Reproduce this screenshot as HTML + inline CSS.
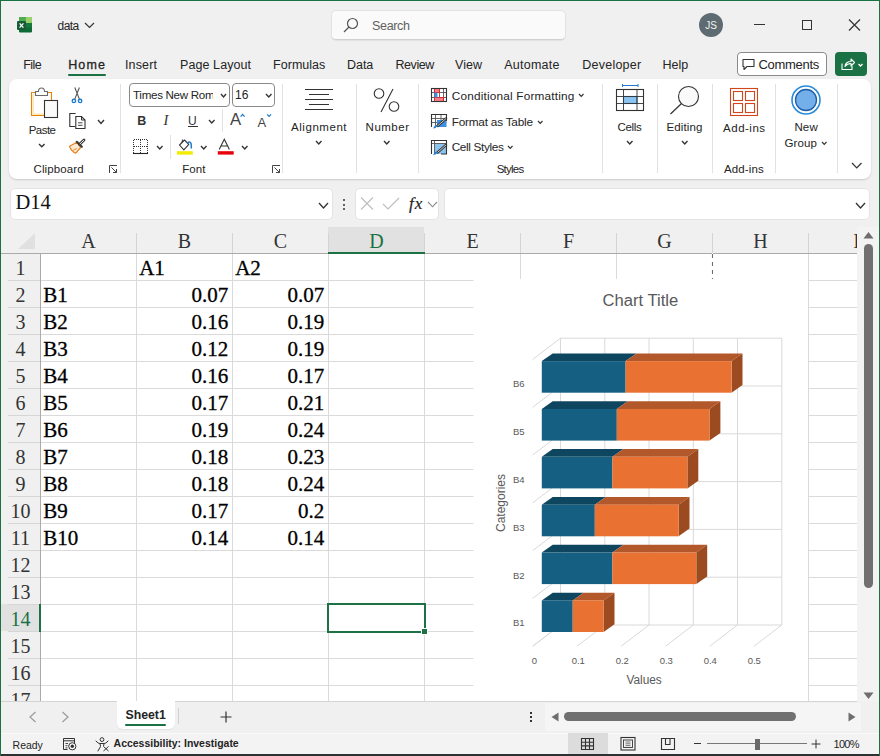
<!DOCTYPE html>
<html><head><meta charset="utf-8"><style>
html,body{margin:0;padding:0;}
body{width:880px;height:756px;overflow:hidden;position:relative;background:#f0f0f0;font-family:'Liberation Sans', sans-serif;}
.t{position:absolute;line-height:1;white-space:nowrap;}
.b{position:absolute;}
svg.b{overflow:visible;}
</style></head><body>
<svg class="b" style="left:0;top:0" width="880" height="756"><rect x="19" y="17" width="13" height="15.5" rx="1.2" fill="#0e6b35"/>
<rect x="19" y="17" width="6.5" height="6" fill="#4cae4f"/>
<rect x="25.5" y="17" width="6.5" height="6" rx="0.8" fill="#9bd16b"/>
<rect x="19" y="23" width="13" height="4.5" fill="#17783d"/>
<rect x="17" y="21" width="9" height="9" rx="1" fill="#185c37"/>
<path d="M19.6 23.4 L23.4 27.6 M23.4 23.4 L19.6 27.6" stroke="#fff" stroke-width="1.3"/></svg><div class="t" style="left:57.6px;top:20.0px;font-size:12px;color:#242424;font-weight:normal;font-family:'Liberation Sans', sans-serif;letter-spacing:-0.57px;">data</div><svg class="b" style="left:84px;top:22px;" width="11" height="7" viewBox="0 0 11 7"><path d="M1 1 L5.5 5.5 L10 1" fill="none" stroke="#333" stroke-width="1.2"/></svg><div class="b" style="left:331px;top:10px;width:235px;height:30px;background:#fafafa;border:1px solid #e3e3e3;border-bottom-color:#d0d0d0;border-radius:5px;box-sizing:border-box;box-shadow:0 1px 1px rgba(0,0,0,0.06);"></div><svg class="b" style="left:342px;top:17px;" width="18" height="17" viewBox="0 0 18 17"><circle cx="10.5" cy="6.5" r="5" fill="none" stroke="#555" stroke-width="1.2"/><path d="M7 10 L2 15" stroke="#555" stroke-width="1.3"/></svg><div class="t" style="left:372.0px;top:20.0px;font-size:12.5px;color:#616161;font-weight:normal;font-family:'Liberation Sans', sans-serif;letter-spacing:-0.33px;">Search</div><svg class="b" style="left:699px;top:13px;" width="24" height="24" viewBox="0 0 24 24"><circle cx="12" cy="12" r="12" fill="#5f6b72"/><text x="12" y="16" font-family="Liberation Sans" font-size="10" fill="#f0f0f0" text-anchor="middle">JS</text></svg><div class="b" style="left:754px;top:24px;width:11px;height:1px;background:#333;"></div><div class="b" style="left:802px;top:20px;width:10px;height:10px;border:1.2px solid #333;box-sizing:border-box;"></div><svg class="b" style="left:848px;top:19px;" width="14" height="12" viewBox="0 0 14 12"><path d="M1 0.5 L12 11.5 M12 0.5 L1 11.5" stroke="#333" stroke-width="1.2"/></svg><div class="t" style="left:23.2px;top:59.0px;font-size:12.5px;color:#242424;font-weight:normal;font-family:'Liberation Sans', sans-serif;letter-spacing:-0.54px;">File</div><div class="t" style="left:68.2px;top:59.0px;font-size:12.5px;color:#242424;font-weight:normal;font-family:'Liberation Sans', sans-serif;letter-spacing:1.12px;-webkit-text-stroke:0.3px #242424;">Home</div><div class="t" style="left:125.0px;top:59.0px;font-size:12.5px;color:#242424;font-weight:normal;font-family:'Liberation Sans', sans-serif;letter-spacing:0.15px;">Insert</div><div class="t" style="left:180.1px;top:59.0px;font-size:12.5px;color:#242424;font-weight:normal;font-family:'Liberation Sans', sans-serif;letter-spacing:0.07px;">Page Layout</div><div class="t" style="left:273.1px;top:59.0px;font-size:12.5px;color:#242424;font-weight:normal;font-family:'Liberation Sans', sans-serif;letter-spacing:0.02px;">Formulas</div><div class="t" style="left:347.0px;top:59.0px;font-size:12.5px;color:#242424;font-weight:normal;font-family:'Liberation Sans', sans-serif;letter-spacing:-0.05px;">Data</div><div class="t" style="left:395.5px;top:59.0px;font-size:12.5px;color:#242424;font-weight:normal;font-family:'Liberation Sans', sans-serif;letter-spacing:-0.44px;">Review</div><div class="t" style="left:455.0px;top:59.0px;font-size:12.5px;color:#242424;font-weight:normal;font-family:'Liberation Sans', sans-serif;letter-spacing:0.04px;">View</div><div class="t" style="left:504.3px;top:59.0px;font-size:12.5px;color:#242424;font-weight:normal;font-family:'Liberation Sans', sans-serif;letter-spacing:0.23px;">Automate</div><div class="t" style="left:582.3px;top:59.0px;font-size:12.5px;color:#242424;font-weight:normal;font-family:'Liberation Sans', sans-serif;letter-spacing:0.23px;">Developer</div><div class="t" style="left:662.4px;top:59.0px;font-size:12.5px;color:#242424;font-weight:normal;font-family:'Liberation Sans', sans-serif;letter-spacing:0.04px;">Help</div><div class="b" style="left:68px;top:74px;width:38px;height:2px;background:#1a7143;border-radius:1px;"></div><div class="b" style="left:737px;top:52px;width:90px;height:24px;border:1px solid #8a8a8a;border-radius:4px;background:#fff;box-sizing:border-box;"></div><svg class="b" style="left:741px;top:57px;" width="16" height="15" viewBox="0 0 16 15"><path d="M2 2.5 H13 V9.5 H6 L3 12.5 V9.5 H2 Z" fill="none" stroke="#333" stroke-width="1.1" stroke-linejoin="round"/></svg><div class="t" style="left:758.4px;top:58.2px;font-size:13px;color:#242424;font-weight:normal;font-family:'Liberation Sans', sans-serif;letter-spacing:-0.28px;">Comments</div><div class="b" style="left:835px;top:52px;width:32px;height:24px;background:#1a7143;border-radius:4px;"></div><svg class="b" style="left:839px;top:56px;" width="26" height="16" viewBox="0 0 26 16"><path d="M3 7.5 V13.5 H13 V10" fill="none" stroke="#fff" stroke-width="1.1"/><path d="M6 10.5 C6 7 9 5.5 12 5.5 V3 L15.5 6.5 L12 10 V7.5 C9.5 7.5 7.5 8.5 6 10.5 Z" fill="none" stroke="#fff" stroke-width="1.1" stroke-linejoin="round"/><path d="M19.5 8 L21.5 10 L23.5 8" fill="none" stroke="#fff" stroke-width="1.3"/></svg><div class="b" style="left:9px;top:79px;width:862px;height:99.6px;background:#fff;border-radius:8px;box-shadow:0 1px 2px rgba(0,0,0,0.16);"></div><div class="b" style="left:120px;top:84px;width:1px;height:89px;background:#e1e1e1;"></div><div class="b" style="left:282px;top:84px;width:1px;height:89px;background:#e1e1e1;"></div><div class="b" style="left:356px;top:84px;width:1px;height:89px;background:#e1e1e1;"></div><div class="b" style="left:418px;top:84px;width:1px;height:89px;background:#e1e1e1;"></div><div class="b" style="left:602px;top:84px;width:1px;height:89px;background:#e1e1e1;"></div><div class="b" style="left:657px;top:84px;width:1px;height:89px;background:#e1e1e1;"></div><div class="b" style="left:712px;top:84px;width:1px;height:89px;background:#e1e1e1;"></div><div class="b" style="left:775px;top:84px;width:1px;height:89px;background:#e1e1e1;"></div><div class="b" style="left:837px;top:84px;width:1px;height:89px;background:#e1e1e1;"></div><div class="t" style="left:33.5px;top:163.6px;font-size:11.5px;color:#242424;font-weight:normal;font-family:'Liberation Sans', sans-serif;letter-spacing:0.11px;">Clipboard</div><div class="t" style="left:182.2px;top:163.6px;font-size:11.5px;color:#242424;font-weight:normal;font-family:'Liberation Sans', sans-serif;letter-spacing:0.07px;">Font</div><div class="t" style="left:496.7px;top:163.6px;font-size:11.5px;color:#242424;font-weight:normal;font-family:'Liberation Sans', sans-serif;letter-spacing:-0.75px;">Styles</div><div class="t" style="left:724.0px;top:163.6px;font-size:11.5px;color:#242424;font-weight:normal;font-family:'Liberation Sans', sans-serif;letter-spacing:0.12px;">Add-ins</div><svg class="b" style="left:109px;top:165px;" width="9" height="9" viewBox="0 0 9 9"><path d="M0.5 8 V0.5 H8" fill="none" stroke="#444" stroke-width="1"/><path d="M2.5 2.5 L7.5 7.5 M4 7.5 H7.5 V4" fill="none" stroke="#444" stroke-width="1"/></svg><svg class="b" style="left:271.5px;top:165px;" width="9" height="9" viewBox="0 0 9 9"><path d="M0.5 8 V0.5 H8" fill="none" stroke="#444" stroke-width="1"/><path d="M2.5 2.5 L7.5 7.5 M4 7.5 H7.5 V4" fill="none" stroke="#444" stroke-width="1"/></svg><svg class="b" style="left:0;top:0" width="880" height="756"><path d="M33.2 94 V114.2 H44" fill="none" stroke="#fde9b0" stroke-width="1.6"/>
<path d="M44 115.5 H31.5 V92.5 H51.5 V100" fill="none" stroke="#e8820e" stroke-width="1.1"/>
<path d="M35.5 91.5 H38.5 C38.5 89 40 88 41.5 88 C43 88 44.5 89 44.5 91.5 H47.5 V95.5 H35.5 Z" fill="#fff" stroke="#6a6a6a" stroke-width="1.1"/>
<rect x="44.5" y="100.5" width="13" height="17" fill="#fafafa" stroke="#333" stroke-width="1.1"/></svg><div class="t" style="left:28.7px;top:124.5px;font-size:11.5px;color:#242424;font-weight:normal;font-family:'Liberation Sans', sans-serif;letter-spacing:-0.52px;">Paste</div><svg class="b" style="left:37.8px;top:143px;" width="7.6" height="4.8" viewBox="0 0 7.6 4.8"><path d="M1 1 L3.8 3.8 L6.6 1" fill="none" stroke="#333" stroke-width="1.35"/></svg><svg class="b" style="left:0;top:0" width="880" height="756"><path d="M74.8 87.5 L79.6 99.6 M79.4 87.5 L74.6 99.6" stroke="#555" stroke-width="1.1"/>
<circle cx="73.9" cy="100.9" r="1.7" fill="#fff" stroke="#1f7bd1" stroke-width="1.4"/><circle cx="80.1" cy="100.9" r="1.7" fill="#fff" stroke="#1f7bd1" stroke-width="1.4"/>
<path d="M75.6 113.5 H69.8 V126.5 H75" fill="none" stroke="#333" stroke-width="1.1"/>
<path d="M75.8 116.5 H81.5 L85 120 V128.5 H75.8 Z" fill="#fff" stroke="#333" stroke-width="1.1"/><path d="M81.5 116.5 V120 H85" fill="none" stroke="#333" stroke-width="1"/>
<path d="M78 122.8 H82.5 M78 125.3 H82.5" stroke="#333" stroke-width="0.9"/></svg><svg class="b" style="left:96.5px;top:119px;" width="8" height="5.5" viewBox="0 0 8 5.5"><path d="M1 1 L4.0 4.5 L7 1" fill="none" stroke="#333" stroke-width="1.35"/></svg><svg class="b" style="left:0;top:0" width="880" height="756"><path d="M77 142.3 L69.5 146.2 Q71.5 151.5 75.8 153.2 L80.6 147.5 Z" fill="#fde9d6" stroke="#e8801f" stroke-width="1.2" stroke-linejoin="round"/>
<path d="M72.5 150.5 L77 148.5" stroke="#f0a050" stroke-width="1.2"/>
<path d="M76.8 141.8 L81.8 146.8" stroke="#3a3a3a" stroke-width="2.2" stroke-linecap="round"/>
<path d="M79.6 144.3 L84 140" stroke="#3a3a3a" stroke-width="2.8" stroke-linecap="round"/><path d="M79.9 144 L83.9 140.1" stroke="#eee" stroke-width="1"/></svg><div class="b" style="left:129px;top:83px;width:101px;height:24px;border:1px solid #8a8a8a;border-radius:4px;box-sizing:border-box;"></div><div class="t" style="left:133.0px;top:88.8px;font-size:11.6px;color:#242424;font-weight:normal;font-family:'Liberation Sans', sans-serif;width:80px;overflow:hidden;white-space:nowrap;letter-spacing:-0.3px;">Times New Rom</div><svg class="b" style="left:220px;top:93px;" width="7" height="5" viewBox="0 0 7 5"><path d="M1 1 L3.5 4 L6 1" fill="none" stroke="#333" stroke-width="1.35"/></svg><div class="b" style="left:232px;top:83px;width:43px;height:24px;border:1px solid #8a8a8a;border-radius:4px;box-sizing:border-box;"></div><div class="t" style="left:235.0px;top:89.2px;font-size:12px;color:#242424;font-weight:normal;font-family:'Liberation Sans', sans-serif;">16</div><svg class="b" style="left:264.5px;top:93px;" width="7.5" height="5" viewBox="0 0 7.5 5"><path d="M1 1 L3.75 4 L6.5 1" fill="none" stroke="#333" stroke-width="1.35"/></svg><div class="t" style="left:137.2px;top:114.5px;font-size:12.5px;color:#333;font-weight:bold;font-family:'Liberation Sans', sans-serif;">B</div><div class="t" style="left:163.6px;top:112.7px;font-size:14.5px;color:#333;font-weight:normal;font-family:'Liberation Serif', serif;font-style:italic;">I</div><div class="t" style="left:188.0px;top:114.9px;font-size:12px;color:#333;font-weight:normal;font-family:'Liberation Sans', sans-serif;">U</div><div class="b" style="left:188px;top:125.5px;width:9.5px;height:1px;background:#333;"></div><svg class="b" style="left:207.5px;top:118.6px;" width="7.5" height="5" viewBox="0 0 7.5 5"><path d="M1 1 L3.75 4 L6.5 1" fill="none" stroke="#333" stroke-width="1.35"/></svg><div class="b" style="left:222px;top:109px;width:1px;height:23px;background:#e1e1e1;"></div><div class="t" style="left:229.9px;top:112.4px;font-size:16.72px;color:#444;font-weight:normal;font-family:'Liberation Sans', sans-serif;">A</div><svg class="b" style="left:0;top:0" width="880" height="756"><path d="M240.6 116.6 L242.6 114.4 L244.6 116.6" fill="none" stroke="#1f7bd1" stroke-width="1.2"/></svg><div class="t" style="left:257.5px;top:115.7px;font-size:12.99px;color:#444;font-weight:normal;font-family:'Liberation Sans', sans-serif;">A</div><svg class="b" style="left:0;top:0" width="880" height="756"><path d="M267.1 114.3 L269.1 116.4 L271.1 114.3" fill="none" stroke="#1f7bd1" stroke-width="1.2"/></svg><svg class="b" style="left:0;top:0" width="880" height="756"><path d="M133.5 139.5 H147.5 V152.5 M133.5 139.5 V152.5 M140.5 139.5 V152.5 M133.5 146 H147.5" fill="none" stroke="#333" stroke-width="1" stroke-dasharray="1 1" shape-rendering="crispEdges"/><path d="M133 153.5 H148" stroke="#222" stroke-width="1.1"/></svg><svg class="b" style="left:155.7px;top:144.8px;" width="7.5" height="5" viewBox="0 0 7.5 5"><path d="M1 1 L3.75 4 L6.5 1" fill="none" stroke="#333" stroke-width="1.35"/></svg><div class="b" style="left:170px;top:135px;width:1px;height:24px;background:#e1e1e1;"></div><svg class="b" style="left:0;top:0" width="880" height="756"><path d="M179.5 145 L184.5 140 L188.8 144.3 L183.8 149.8 Z" fill="#fff" stroke="#333" stroke-width="1.1" stroke-linejoin="round"/><path d="M182 142.5 L182.5 139.5" stroke="#333" stroke-width="1"/><path d="M187.5 143 C189.5 141 191.5 142.5 191.3 145.5 V148.5" fill="none" stroke="#1f7bd1" stroke-width="1.5"/><rect x="177" y="151.2" width="15.8" height="3.4" fill="#f2ec00"/></svg><svg class="b" style="left:199.8px;top:145px;" width="7.5" height="5" viewBox="0 0 7.5 5"><path d="M1 1 L3.75 4 L6.5 1" fill="none" stroke="#333" stroke-width="1.35"/></svg><svg class="b" style="left:0;top:0" width="880" height="756"><path d="M219.2 149.5 L224.3 139.3 L229.4 149.5 M221 146 H227.6" fill="none" stroke="#333" stroke-width="1.1"/><rect x="217.8" y="151.2" width="15.9" height="3.4" fill="#e8000b"/></svg><svg class="b" style="left:240.7px;top:145px;" width="7.5" height="5" viewBox="0 0 7.5 5"><path d="M1 1 L3.75 4 L6.5 1" fill="none" stroke="#333" stroke-width="1.35"/></svg><svg class="b" style="left:304px;top:88px;" width="30" height="23" viewBox="0 0 30 23"><path d="M1 1.5 H29 M5 6.5 H25 M1 11.5 H29 M5 16.5 H25 M1 21.5 H29" stroke="#333" stroke-width="1.1"/></svg><div class="t" style="left:291.0px;top:121.7px;font-size:11.5px;color:#242424;font-weight:normal;font-family:'Liberation Sans', sans-serif;letter-spacing:0.55px;">Alignment</div><svg class="b" style="left:315px;top:140px;" width="7.5" height="5" viewBox="0 0 7.5 5"><path d="M1 1 L3.75 4 L6.5 1" fill="none" stroke="#333" stroke-width="1.35"/></svg><svg class="b" style="left:373px;top:87px;" width="28" height="26" viewBox="0 0 28 26"><circle cx="6" cy="6.5" r="4.8" fill="none" stroke="#333" stroke-width="1.1"/><circle cx="21" cy="19.5" r="4.8" fill="none" stroke="#333" stroke-width="1.1"/><path d="M20 2 L8 25" stroke="#333" stroke-width="1.1"/></svg><div class="t" style="left:365.6px;top:121.7px;font-size:11.5px;color:#242424;font-weight:normal;font-family:'Liberation Sans', sans-serif;letter-spacing:0.50px;">Number</div><svg class="b" style="left:383.3px;top:140px;" width="7.5" height="5" viewBox="0 0 7.5 5"><path d="M1 1 L3.75 4 L6.5 1" fill="none" stroke="#333" stroke-width="1.35"/></svg><svg class="b" style="left:0;top:0" width="880" height="756"><rect x="431.5" y="88.5" width="15" height="13" fill="#fff"/>
<path d="M431.5 92.5 H446.5 M431.5 97.5 H446.5 M434.5 88.5 V101.5 M439.5 88.5 V101.5 M443.5 88.5 V101.5" stroke="#555" stroke-width="0.9"/>
<rect x="434.5" y="88.5" width="5" height="4" fill="#f27f86" stroke="#e0262e" stroke-width="1"/>
<rect x="434.5" y="97.5" width="9" height="4" fill="#f27f86" stroke="#e0262e" stroke-width="1"/>
<rect x="434.5" y="92.5" width="3" height="5" fill="#3d8fe0"/>
<rect x="431.5" y="88.5" width="15" height="13" fill="none" stroke="#333" stroke-width="1.1"/></svg><div class="t" style="left:451.7px;top:91.1px;font-size:11.8px;color:#242424;font-weight:normal;font-family:'Liberation Sans', sans-serif;letter-spacing:0.19px;">Conditional Formatting</div><svg class="b" style="left:578px;top:93px;" width="6.5" height="4.5" viewBox="0 0 6.5 4.5"><path d="M1 1 L3.25 3.5 L5.5 1" fill="none" stroke="#333" stroke-width="1.15"/></svg><svg class="b" style="left:0;top:0" width="880" height="756"><rect x="431.5" y="114.5" width="15" height="12.5" fill="#fff"/>
<path d="M431.5 118.5 H446.5 M431.5 122.5 H446.5 M435.5 114.5 V127 M441 114.5 V127" stroke="#555" stroke-width="0.9"/>
<path d="M437 120 H446.5 V127 H437 Z" fill="#3d8fe0"/>
<path d="M431.5 127 V114.5 H446.5 V121" fill="none" stroke="#333" stroke-width="1.1"/>
<path d="M446 118.5 L437.5 126" stroke="#333" stroke-width="2.4" stroke-linecap="round"/><path d="M446 118.5 L437.5 126" stroke="#ddd" stroke-width="0.9"/>
<path d="M438 125 L435.5 128 L433 128.6 L435 125.5 Z" fill="#1f7bd1"/></svg><div class="t" style="left:451.7px;top:116.6px;font-size:11.8px;color:#242424;font-weight:normal;font-family:'Liberation Sans', sans-serif;letter-spacing:-0.22px;">Format as Table</div><svg class="b" style="left:536.6px;top:119.5px;" width="6.5" height="4.5" viewBox="0 0 6.5 4.5"><path d="M1 1 L3.25 3.5 L5.5 1" fill="none" stroke="#333" stroke-width="1.15"/></svg><svg class="b" style="left:0;top:0" width="880" height="756"><rect x="431.5" y="140.5" width="15" height="13.5" fill="#fff"/>
<path d="M434.5 143.5 H446 V154 H434.5 Z" fill="#8cc4f0"/>
<path d="M431.5 143.5 H446.5 M434.5 140.5 V154" stroke="#555" stroke-width="0.9"/>
<path d="M431.5 154 V140.5 H446.5 V154 H441" fill="none" stroke="#333" stroke-width="1.1"/>
<path d="M446 145 L437.5 152.5" stroke="#333" stroke-width="2.4" stroke-linecap="round"/><path d="M446 145 L437.5 152.5" stroke="#ddd" stroke-width="0.9"/>
<path d="M438 151.5 L435.5 154.5 L433 155.1 L435 152 Z" fill="#1f7bd1"/></svg><div class="t" style="left:451.7px;top:142.2px;font-size:11.8px;color:#242424;font-weight:normal;font-family:'Liberation Sans', sans-serif;letter-spacing:-0.36px;">Cell Styles</div><svg class="b" style="left:507px;top:145.3px;" width="6.5" height="4.5" viewBox="0 0 6.5 4.5"><path d="M1 1 L3.25 3.5 L5.5 1" fill="none" stroke="#333" stroke-width="1.15"/></svg><svg class="b" style="left:615px;top:84px;" width="30" height="28" viewBox="0 0 30 28"><path d="M7.5 1.5 H23 M7.5 0 V3 M23 0 V3" stroke="#1f7bd1" stroke-width="1"/><rect x="1.5" y="5.5" width="27" height="21" fill="#fff" stroke="#333" stroke-width="1.1"/><rect x="8.5" y="12.5" width="13.5" height="7" fill="#8cc4f0" stroke="#1f6fc0" stroke-width="1.1"/><path d="M1.5 12.5 H28.5 M1.5 19.5 H28.5 M8.5 5.5 V26.5 M22 5.5 V26.5" stroke="#333" stroke-width="0.9"/></svg><div class="t" style="left:617.4px;top:121.9px;font-size:11.5px;color:#242424;font-weight:normal;font-family:'Liberation Sans', sans-serif;letter-spacing:-0.32px;">Cells</div><svg class="b" style="left:625.8px;top:140px;" width="7.5" height="5" viewBox="0 0 7.5 5"><path d="M1 1 L3.75 4 L6.5 1" fill="none" stroke="#333" stroke-width="1.35"/></svg><svg class="b" style="left:668px;top:84px;" width="34" height="32" viewBox="0 0 34 32"><circle cx="20.5" cy="12.5" r="10" fill="#fafafa" stroke="#333" stroke-width="1.1"/><path d="M13.5 19.5 L2.5 30" stroke="#333" stroke-width="1.2"/></svg><div class="t" style="left:666.4px;top:121.9px;font-size:11.5px;color:#242424;font-weight:normal;font-family:'Liberation Sans', sans-serif;letter-spacing:0.15px;">Editing</div><svg class="b" style="left:681px;top:140px;" width="7.5" height="5" viewBox="0 0 7.5 5"><path d="M1 1 L3.75 4 L6.5 1" fill="none" stroke="#333" stroke-width="1.35"/></svg><svg class="b" style="left:0;top:0" width="880" height="756"><g fill="none" stroke="#d2461c" stroke-width="1.1"><rect x="730.5" y="88.5" width="27" height="27"/><rect x="733.5" y="91.5" width="9" height="9"/><rect x="745.5" y="91.5" width="9" height="9"/><rect x="733.5" y="103.5" width="9" height="9"/><rect x="745.5" y="103.5" width="9" height="9"/></g></svg><div class="t" style="left:723.1px;top:123.4px;font-size:11.5px;color:#242424;font-weight:normal;font-family:'Liberation Sans', sans-serif;letter-spacing:0.49px;">Add-ins</div><svg class="b" style="left:790px;top:84px;" width="32" height="32" viewBox="0 0 32 32"><circle cx="16" cy="16" r="14" fill="#fff" stroke="#2b8ad8" stroke-width="1.6"/><circle cx="16" cy="16" r="10.5" fill="#73b0ea" stroke="#1a5da8" stroke-width="1.3"/></svg><div class="t" style="left:794.4px;top:122.1px;font-size:11.5px;color:#242424;font-weight:normal;font-family:'Liberation Sans', sans-serif;letter-spacing:0.17px;">New</div><div class="t" style="left:784.4px;top:138.1px;font-size:11.5px;color:#242424;font-weight:normal;font-family:'Liberation Sans', sans-serif;letter-spacing:0.11px;">Group</div><svg class="b" style="left:821.4px;top:140.5px;" width="6.5" height="4.5" viewBox="0 0 6.5 4.5"><path d="M1 1 L3.25 3.5 L5.5 1" fill="none" stroke="#333" stroke-width="1.15"/></svg><svg class="b" style="left:851px;top:162px;" width="11.5" height="7" viewBox="0 0 11.5 7"><path d="M1 1 L5.75 6 L10.5 1" fill="none" stroke="#333" stroke-width="1.2"/></svg><div class="b" style="left:10px;top:188px;width:323px;height:31.5px;background:#fff;border:1px solid #e3e3e3;border-radius:5px;box-sizing:border-box;"></div><div class="t" style="left:15.5px;top:191.8px;font-size:20.5px;color:#111;font-weight:normal;font-family:'Liberation Serif', serif;">D14</div><svg class="b" style="left:318px;top:201.5px;" width="11" height="7" viewBox="0 0 11 7"><path d="M1 1 L5.5 6 L10 1" fill="none" stroke="#333" stroke-width="1.3"/></svg><div class="b" style="left:343px;top:199px;width:2px;height:2px;background:#333;border-radius:1px;"></div><div class="b" style="left:343px;top:204px;width:2px;height:2px;background:#333;border-radius:1px;"></div><div class="b" style="left:343px;top:208px;width:2px;height:2px;background:#333;border-radius:1px;"></div><div class="b" style="left:355px;top:188px;width:84px;height:31.5px;background:#fff;border:1px solid #e3e3e3;border-radius:5px;box-sizing:border-box;"></div><svg class="b" style="left:360px;top:197px;" width="14" height="13" viewBox="0 0 14 13"><path d="M1 0.5 L13 12.5 M13 0.5 L1 12.5" stroke="#bdbdbd" stroke-width="1.1"/></svg><svg class="b" style="left:382px;top:197px;" width="18" height="13" viewBox="0 0 18 13"><path d="M1 7 L6 12 L17 1" fill="none" stroke="#bdbdbd" stroke-width="1.1"/></svg><div class="t" style="left:409.0px;top:194.8px;font-size:17px;color:#222;font-weight:normal;font-family:'Liberation Serif', serif;-webkit-text-stroke:0.2px #222;"><i>f</i><i style="margin-left:1px">x</i></div><svg class="b" style="left:427px;top:201px;" width="11" height="6.8" viewBox="0 0 11 6.8"><path d="M1 1 L5.5 5.8 L10 1" fill="none" stroke="#8a8a8a" stroke-width="1.1"/></svg><div class="b" style="left:444px;top:188px;width:426px;height:31.5px;background:#fff;border:1px solid #e3e3e3;border-radius:5px;box-sizing:border-box;"></div><svg class="b" style="left:855px;top:201.5px;" width="11" height="7" viewBox="0 0 11 7"><path d="M1 1 L5.5 6 L10 1" fill="none" stroke="#333" stroke-width="1.3"/></svg><div class="b" style="left:1px;top:227px;width:856px;height:26px;background:#f0f0f0;"></div><div class="b" style="left:41px;top:254px;width:816px;height:447px;background:#fff;"></div><div class="b" style="left:328px;top:227px;width:96px;height:26px;background:#e1e1e1;"></div><div class="b" style="left:1px;top:604px;width:40px;height:27px;background:#e1e1e1;"></div><svg class="b" style="left:16px;top:232px;" width="20" height="18" viewBox="0 0 20 18"><path d="M19 1 V17 H2 Z" fill="#e0e0e0"/></svg><svg class="b" style="left:0;top:0" width="880" height="756"><line x1="136.5" y1="233" x2="136.5" y2="253" stroke="#d4d4d4"/><line x1="232.5" y1="233" x2="232.5" y2="253" stroke="#d4d4d4"/><line x1="328.5" y1="233" x2="328.5" y2="253" stroke="#d4d4d4"/><line x1="424.5" y1="233" x2="424.5" y2="253" stroke="#d4d4d4"/><line x1="520.5" y1="233" x2="520.5" y2="253" stroke="#d4d4d4"/><line x1="616.5" y1="233" x2="616.5" y2="253" stroke="#d4d4d4"/><line x1="712.5" y1="233" x2="712.5" y2="253" stroke="#d4d4d4"/><line x1="808.5" y1="233" x2="808.5" y2="253" stroke="#d4d4d4"/><line x1="1" y1="253.5" x2="857" y2="253.5" stroke="#ababab"/><line x1="40.5" y1="253" x2="40.5" y2="701" stroke="#ababab"/><line x1="8" y1="280.5" x2="40" y2="280.5" stroke="#d6d6d6"/><line x1="8" y1="307.5" x2="40" y2="307.5" stroke="#d6d6d6"/><line x1="8" y1="334.5" x2="40" y2="334.5" stroke="#d6d6d6"/><line x1="8" y1="361.5" x2="40" y2="361.5" stroke="#d6d6d6"/><line x1="8" y1="388.5" x2="40" y2="388.5" stroke="#d6d6d6"/><line x1="8" y1="415.5" x2="40" y2="415.5" stroke="#d6d6d6"/><line x1="8" y1="442.5" x2="40" y2="442.5" stroke="#d6d6d6"/><line x1="8" y1="469.5" x2="40" y2="469.5" stroke="#d6d6d6"/><line x1="8" y1="496.5" x2="40" y2="496.5" stroke="#d6d6d6"/><line x1="8" y1="523.5" x2="40" y2="523.5" stroke="#d6d6d6"/><line x1="8" y1="550.5" x2="40" y2="550.5" stroke="#d6d6d6"/><line x1="8" y1="577.5" x2="40" y2="577.5" stroke="#d6d6d6"/><line x1="8" y1="604.5" x2="40" y2="604.5" stroke="#d6d6d6"/><line x1="8" y1="631.5" x2="40" y2="631.5" stroke="#d6d6d6"/><line x1="8" y1="658.5" x2="40" y2="658.5" stroke="#d6d6d6"/><line x1="8" y1="685.5" x2="40" y2="685.5" stroke="#d6d6d6"/><line x1="8" y1="712.5" x2="40" y2="712.5" stroke="#d6d6d6"/><line x1="41" y1="280.5" x2="857" y2="280.5" stroke="#dadada"/><line x1="41" y1="307.5" x2="857" y2="307.5" stroke="#dadada"/><line x1="41" y1="334.5" x2="857" y2="334.5" stroke="#dadada"/><line x1="41" y1="361.5" x2="857" y2="361.5" stroke="#dadada"/><line x1="41" y1="388.5" x2="857" y2="388.5" stroke="#dadada"/><line x1="41" y1="415.5" x2="857" y2="415.5" stroke="#dadada"/><line x1="41" y1="442.5" x2="857" y2="442.5" stroke="#dadada"/><line x1="41" y1="469.5" x2="857" y2="469.5" stroke="#dadada"/><line x1="41" y1="496.5" x2="857" y2="496.5" stroke="#dadada"/><line x1="41" y1="523.5" x2="857" y2="523.5" stroke="#dadada"/><line x1="41" y1="550.5" x2="857" y2="550.5" stroke="#dadada"/><line x1="41" y1="577.5" x2="857" y2="577.5" stroke="#dadada"/><line x1="41" y1="604.5" x2="857" y2="604.5" stroke="#dadada"/><line x1="41" y1="631.5" x2="857" y2="631.5" stroke="#dadada"/><line x1="41" y1="658.5" x2="857" y2="658.5" stroke="#dadada"/><line x1="41" y1="685.5" x2="857" y2="685.5" stroke="#dadada"/><line x1="41" y1="712.5" x2="857" y2="712.5" stroke="#dadada"/><line x1="136.5" y1="254" x2="136.5" y2="701" stroke="#dadada"/><line x1="232.5" y1="254" x2="232.5" y2="701" stroke="#dadada"/><line x1="328.5" y1="254" x2="328.5" y2="701" stroke="#dadada"/><line x1="424.5" y1="254" x2="424.5" y2="701" stroke="#dadada"/><line x1="520.5" y1="254" x2="520.5" y2="701" stroke="#dadada"/><line x1="616.5" y1="254" x2="616.5" y2="701" stroke="#dadada"/><line x1="712.5" y1="254" x2="712.5" y2="701" stroke="#dadada"/><line x1="808.5" y1="254" x2="808.5" y2="701" stroke="#dadada"/><line x1="712.5" y1="253" x2="712.5" y2="701" stroke="#fff"/><line x1="712.5" y1="254" x2="712.5" y2="701" stroke="#6e6e6e" stroke-dasharray="4 4" stroke-width="1.1"/></svg><div class="b" style="left:328px;top:251.5px;width:97px;height:2px;background:#1e7145;"></div><div class="b" style="left:39px;top:603.5px;width:2px;height:28.5px;background:#1e7145;"></div><div class="t" style="left:-111.5px;width:400px;text-align:center;top:230.9px;font-size:20px;color:#333;font-weight:normal;font-family:'Liberation Serif', serif;">A</div><div class="t" style="left:-15.5px;width:400px;text-align:center;top:230.9px;font-size:20px;color:#333;font-weight:normal;font-family:'Liberation Serif', serif;">B</div><div class="t" style="left:80.5px;width:400px;text-align:center;top:230.9px;font-size:20px;color:#333;font-weight:normal;font-family:'Liberation Serif', serif;">C</div><div class="t" style="left:176.5px;width:400px;text-align:center;top:230.9px;font-size:20px;color:#1a7143;font-weight:normal;font-family:'Liberation Serif', serif;">D</div><div class="t" style="left:272.5px;width:400px;text-align:center;top:230.9px;font-size:20px;color:#333;font-weight:normal;font-family:'Liberation Serif', serif;">E</div><div class="t" style="left:368.5px;width:400px;text-align:center;top:230.9px;font-size:20px;color:#333;font-weight:normal;font-family:'Liberation Serif', serif;">F</div><div class="t" style="left:464.5px;width:400px;text-align:center;top:230.9px;font-size:20px;color:#333;font-weight:normal;font-family:'Liberation Serif', serif;">G</div><div class="t" style="left:560.5px;width:400px;text-align:center;top:230.9px;font-size:20px;color:#333;font-weight:normal;font-family:'Liberation Serif', serif;">H</div><div class="t" style="left:656.5px;width:400px;text-align:center;top:230.9px;font-size:20px;color:#333;font-weight:normal;font-family:'Liberation Serif', serif;">I</div><div class="t" style="left:-179.5px;width:400px;text-align:center;top:258.2px;font-size:20px;color:#333;font-weight:normal;font-family:'Liberation Serif', serif;">1</div><div class="t" style="left:-179.5px;width:400px;text-align:center;top:285.2px;font-size:20px;color:#333;font-weight:normal;font-family:'Liberation Serif', serif;">2</div><div class="t" style="left:-179.5px;width:400px;text-align:center;top:312.2px;font-size:20px;color:#333;font-weight:normal;font-family:'Liberation Serif', serif;">3</div><div class="t" style="left:-179.5px;width:400px;text-align:center;top:339.2px;font-size:20px;color:#333;font-weight:normal;font-family:'Liberation Serif', serif;">4</div><div class="t" style="left:-179.5px;width:400px;text-align:center;top:366.2px;font-size:20px;color:#333;font-weight:normal;font-family:'Liberation Serif', serif;">5</div><div class="t" style="left:-179.5px;width:400px;text-align:center;top:393.2px;font-size:20px;color:#333;font-weight:normal;font-family:'Liberation Serif', serif;">6</div><div class="t" style="left:-179.5px;width:400px;text-align:center;top:420.2px;font-size:20px;color:#333;font-weight:normal;font-family:'Liberation Serif', serif;">7</div><div class="t" style="left:-179.5px;width:400px;text-align:center;top:447.2px;font-size:20px;color:#333;font-weight:normal;font-family:'Liberation Serif', serif;">8</div><div class="t" style="left:-179.5px;width:400px;text-align:center;top:474.2px;font-size:20px;color:#333;font-weight:normal;font-family:'Liberation Serif', serif;">9</div><div class="t" style="left:-179.5px;width:400px;text-align:center;top:501.2px;font-size:20px;color:#333;font-weight:normal;font-family:'Liberation Serif', serif;">10</div><div class="t" style="left:-179.5px;width:400px;text-align:center;top:528.2px;font-size:20px;color:#333;font-weight:normal;font-family:'Liberation Serif', serif;">11</div><div class="t" style="left:-179.5px;width:400px;text-align:center;top:555.2px;font-size:20px;color:#333;font-weight:normal;font-family:'Liberation Serif', serif;">12</div><div class="t" style="left:-179.5px;width:400px;text-align:center;top:582.2px;font-size:20px;color:#333;font-weight:normal;font-family:'Liberation Serif', serif;">13</div><div class="t" style="left:-179.5px;width:400px;text-align:center;top:609.2px;font-size:20px;color:#1a7143;font-weight:normal;font-family:'Liberation Serif', serif;">14</div><div class="t" style="left:-179.5px;width:400px;text-align:center;top:636.2px;font-size:20px;color:#333;font-weight:normal;font-family:'Liberation Serif', serif;">15</div><div class="t" style="left:-179.5px;width:400px;text-align:center;top:663.2px;font-size:20px;color:#333;font-weight:normal;font-family:'Liberation Serif', serif;">16</div><div class="t" style="left:-179.5px;width:400px;text-align:center;top:690.2px;font-size:20px;color:#333;font-weight:normal;font-family:'Liberation Serif', serif;">17</div><div class="t" style="left:139.2px;top:257.7px;font-size:21px;color:#000;font-weight:normal;font-family:'Liberation Serif', serif;-webkit-text-stroke:0.3px #000;">A1</div><div class="t" style="left:235.2px;top:257.7px;font-size:21px;color:#000;font-weight:normal;font-family:'Liberation Serif', serif;-webkit-text-stroke:0.3px #000;">A2</div><div class="t" style="left:43.2px;top:284.7px;font-size:21px;color:#000;font-weight:normal;font-family:'Liberation Serif', serif;-webkit-text-stroke:0.3px #000;">B1</div><div class="t" style="right:651.8px;top:284.7px;font-size:21px;color:#000;font-weight:normal;font-family:'Liberation Serif', serif;-webkit-text-stroke:0.3px #000;">0.07</div><div class="t" style="right:555.8px;top:284.7px;font-size:21px;color:#000;font-weight:normal;font-family:'Liberation Serif', serif;-webkit-text-stroke:0.3px #000;">0.07</div><div class="t" style="left:43.2px;top:311.7px;font-size:21px;color:#000;font-weight:normal;font-family:'Liberation Serif', serif;-webkit-text-stroke:0.3px #000;">B2</div><div class="t" style="right:651.8px;top:311.7px;font-size:21px;color:#000;font-weight:normal;font-family:'Liberation Serif', serif;-webkit-text-stroke:0.3px #000;">0.16</div><div class="t" style="right:555.8px;top:311.7px;font-size:21px;color:#000;font-weight:normal;font-family:'Liberation Serif', serif;-webkit-text-stroke:0.3px #000;">0.19</div><div class="t" style="left:43.2px;top:338.7px;font-size:21px;color:#000;font-weight:normal;font-family:'Liberation Serif', serif;-webkit-text-stroke:0.3px #000;">B3</div><div class="t" style="right:651.8px;top:338.7px;font-size:21px;color:#000;font-weight:normal;font-family:'Liberation Serif', serif;-webkit-text-stroke:0.3px #000;">0.12</div><div class="t" style="right:555.8px;top:338.7px;font-size:21px;color:#000;font-weight:normal;font-family:'Liberation Serif', serif;-webkit-text-stroke:0.3px #000;">0.19</div><div class="t" style="left:43.2px;top:365.7px;font-size:21px;color:#000;font-weight:normal;font-family:'Liberation Serif', serif;-webkit-text-stroke:0.3px #000;">B4</div><div class="t" style="right:651.8px;top:365.7px;font-size:21px;color:#000;font-weight:normal;font-family:'Liberation Serif', serif;-webkit-text-stroke:0.3px #000;">0.16</div><div class="t" style="right:555.8px;top:365.7px;font-size:21px;color:#000;font-weight:normal;font-family:'Liberation Serif', serif;-webkit-text-stroke:0.3px #000;">0.17</div><div class="t" style="left:43.2px;top:392.7px;font-size:21px;color:#000;font-weight:normal;font-family:'Liberation Serif', serif;-webkit-text-stroke:0.3px #000;">B5</div><div class="t" style="right:651.8px;top:392.7px;font-size:21px;color:#000;font-weight:normal;font-family:'Liberation Serif', serif;-webkit-text-stroke:0.3px #000;">0.17</div><div class="t" style="right:555.8px;top:392.7px;font-size:21px;color:#000;font-weight:normal;font-family:'Liberation Serif', serif;-webkit-text-stroke:0.3px #000;">0.21</div><div class="t" style="left:43.2px;top:419.7px;font-size:21px;color:#000;font-weight:normal;font-family:'Liberation Serif', serif;-webkit-text-stroke:0.3px #000;">B6</div><div class="t" style="right:651.8px;top:419.7px;font-size:21px;color:#000;font-weight:normal;font-family:'Liberation Serif', serif;-webkit-text-stroke:0.3px #000;">0.19</div><div class="t" style="right:555.8px;top:419.7px;font-size:21px;color:#000;font-weight:normal;font-family:'Liberation Serif', serif;-webkit-text-stroke:0.3px #000;">0.24</div><div class="t" style="left:43.2px;top:446.7px;font-size:21px;color:#000;font-weight:normal;font-family:'Liberation Serif', serif;-webkit-text-stroke:0.3px #000;">B7</div><div class="t" style="right:651.8px;top:446.7px;font-size:21px;color:#000;font-weight:normal;font-family:'Liberation Serif', serif;-webkit-text-stroke:0.3px #000;">0.18</div><div class="t" style="right:555.8px;top:446.7px;font-size:21px;color:#000;font-weight:normal;font-family:'Liberation Serif', serif;-webkit-text-stroke:0.3px #000;">0.23</div><div class="t" style="left:43.2px;top:473.7px;font-size:21px;color:#000;font-weight:normal;font-family:'Liberation Serif', serif;-webkit-text-stroke:0.3px #000;">B8</div><div class="t" style="right:651.8px;top:473.7px;font-size:21px;color:#000;font-weight:normal;font-family:'Liberation Serif', serif;-webkit-text-stroke:0.3px #000;">0.18</div><div class="t" style="right:555.8px;top:473.7px;font-size:21px;color:#000;font-weight:normal;font-family:'Liberation Serif', serif;-webkit-text-stroke:0.3px #000;">0.24</div><div class="t" style="left:43.2px;top:500.7px;font-size:21px;color:#000;font-weight:normal;font-family:'Liberation Serif', serif;-webkit-text-stroke:0.3px #000;">B9</div><div class="t" style="right:651.8px;top:500.7px;font-size:21px;color:#000;font-weight:normal;font-family:'Liberation Serif', serif;-webkit-text-stroke:0.3px #000;">0.17</div><div class="t" style="right:555.8px;top:500.7px;font-size:21px;color:#000;font-weight:normal;font-family:'Liberation Serif', serif;-webkit-text-stroke:0.3px #000;">0.2</div><div class="t" style="left:43.2px;top:527.7px;font-size:21px;color:#000;font-weight:normal;font-family:'Liberation Serif', serif;-webkit-text-stroke:0.3px #000;">B10</div><div class="t" style="right:651.8px;top:527.7px;font-size:21px;color:#000;font-weight:normal;font-family:'Liberation Serif', serif;-webkit-text-stroke:0.3px #000;">0.14</div><div class="t" style="right:555.8px;top:527.7px;font-size:21px;color:#000;font-weight:normal;font-family:'Liberation Serif', serif;-webkit-text-stroke:0.3px #000;">0.14</div><div class="b" style="left:327px;top:603px;width:99px;height:29.5px;border:2px solid #1e7145;box-sizing:border-box;"></div><div class="b" style="left:421px;top:628px;width:5px;height:5px;background:#1e7145;border:1px solid #fff;box-sizing:content-box;"></div><div class="b" style="left:857px;top:227px;width:22px;height:475px;background:#f3f3f3;"></div><svg class="b" style="left:863px;top:231px;" width="11" height="8" viewBox="0 0 11 8"><path d="M5.5 1 L10.5 7.5 H0.5 Z" fill="#6e6e6e"/></svg><div class="b" style="left:864px;top:244px;width:9px;height:344px;background:#707070;border-radius:4.5px;"></div><svg class="b" style="left:863px;top:692px;" width="11" height="8" viewBox="0 0 11 8"><path d="M0.5 0.5 H10.5 L5.5 7 Z" fill="#6e6e6e"/></svg><div class="b" style="left:1px;top:701px;width:878px;height:32px;background:#f0f0f0;"></div><div class="b" style="left:1px;top:701px;width:856px;height:1px;background:#d4d4d4;"></div><svg class="b" style="left:28px;top:711px;" width="9" height="12" viewBox="0 0 9 12"><path d="M7.5 1 L2 6 L7.5 11" fill="none" stroke="#9a9a9a" stroke-width="1.2"/></svg><svg class="b" style="left:61px;top:711px;" width="9" height="12" viewBox="0 0 9 12"><path d="M1.5 1 L7 6 L1.5 11" fill="none" stroke="#9a9a9a" stroke-width="1.2"/></svg><div class="b" style="left:117px;top:701px;width:58px;height:28px;background:#fff;border-radius:0 0 6px 6px;box-shadow:0 1px 1px rgba(0,0,0,0.06);"></div><div class="t" style="left:125.5px;top:709.4px;font-size:12.29px;color:#242424;font-weight:bold;font-family:'Liberation Sans', sans-serif;">Sheet1</div><div class="b" style="left:125px;top:723.5px;width:41px;height:2px;background:#1a7143;border-radius:1px;"></div><div class="b" style="left:178px;top:708px;width:1px;height:16px;background:#d0d0d0;"></div><svg class="b" style="left:220px;top:711px;" width="12" height="12" viewBox="0 0 12 12"><path d="M6 0.5 V11.5 M0.5 6 H11.5" stroke="#333" stroke-width="1.2"/></svg><div class="b" style="left:530px;top:712px;width:2px;height:2px;background:#333;"></div><div class="b" style="left:530px;top:716px;width:2px;height:2px;background:#333;"></div><div class="b" style="left:530px;top:720px;width:2px;height:2px;background:#333;"></div><div class="b" style="left:545px;top:703px;width:316px;height:28px;background:#f5f5f5;"></div><svg class="b" style="left:551px;top:712px;" width="8" height="10" viewBox="0 0 8 10"><path d="M7.5 0.5 V9.5 L0.5 5 Z" fill="#6e6e6e"/></svg><div class="b" style="left:564px;top:712px;width:232px;height:9px;background:#707070;border-radius:4.5px;"></div><svg class="b" style="left:848px;top:712px;" width="8" height="10" viewBox="0 0 8 10"><path d="M0.5 0.5 V9.5 L7.5 5 Z" fill="#6e6e6e"/></svg><div class="b" style="left:1px;top:733px;width:878px;height:1px;background:#fafafa;"></div><div class="b" style="left:1px;top:734px;width:878px;height:20px;background:#f3f3f3;"></div><div class="t" style="left:12.6px;top:739.9px;font-size:10.5px;color:#242424;font-weight:normal;font-family:'Liberation Sans', sans-serif;letter-spacing:-0.04px;">Ready</div><svg class="b" style="left:0;top:0" width="880" height="756"><path d="M74.5 743 V738.5 H63.5 V749.5 H67.5" fill="none" stroke="#333" stroke-width="1"/><path d="M63.5 740.8 H74.5" stroke="#333" stroke-width="1"/><path d="M65.5 743.5 H68 M65.5 745.7 H67.5 M65.5 747.9 H67.5" stroke="#333" stroke-width="0.9"/><circle cx="72.3" cy="746.3" r="3.6" fill="#fff" stroke="#333" stroke-width="1"/><circle cx="72.3" cy="746.3" r="1.7" fill="#333"/></svg><svg class="b" style="left:0;top:0" width="880" height="756"><circle cx="102" cy="739.6" r="1.9" fill="none" stroke="#333" stroke-width="1"/><path d="M96 741 C97.5 743 99 743.5 100 743.5 H104 C105 743.5 106.5 743 108 741 M100 743.5 L100.5 746.5 L98 751 M104 743.5 L103.6 746" fill="none" stroke="#333" stroke-width="1" stroke-linecap="round"/><path d="M103.5 746.5 L108.5 751 M108.5 746.5 L103.5 751" stroke="#333" stroke-width="1"/></svg><div class="t" style="left:113.6px;top:739.2px;font-size:10.47px;color:#242424;font-weight:bold;font-family:'Liberation Sans', sans-serif;">Accessibility: Investigate</div><div class="b" style="left:568px;top:733px;width:40px;height:21px;background:#dcdcdc;"></div><svg class="b" style="left:580px;top:737px;" width="15" height="14" viewBox="0 0 15 14"><path d="M1.5 1.5 H13.5 V12.5 H1.5 Z M1.5 5.2 H13.5 M1.5 8.9 H13.5 M5.5 1.5 V12.5 M9.5 1.5 V12.5" fill="none" stroke="#333" stroke-width="1.1"/></svg><svg class="b" style="left:0;top:0" width="880" height="756"><rect x="621" y="737.5" width="14" height="12.5" fill="none" stroke="#333" stroke-width="1.1"/><rect x="623.5" y="740" width="9" height="7.5" fill="none" stroke="#333" stroke-width="0.9"/><path d="M625.5 742 H630.5 M625.5 743.8 H630.5 M625.5 745.6 H630.5" stroke="#444" stroke-width="0.7"/></svg><svg class="b" style="left:660px;top:737px;" width="16" height="14" viewBox="0 0 16 14"><path d="M1.5 1.5 H14.5 V12.5 H1.5 Z M5.5 1.5 V7.5 H10 V1.5" fill="none" stroke="#333" stroke-width="1.1"/></svg><div class="b" style="left:694px;top:743px;width:7px;height:1px;background:#333;"></div><div class="b" style="left:707px;top:743px;width:100px;height:1px;background:#777;"></div><div class="b" style="left:755px;top:739px;width:5px;height:11px;background:#6a6a6a;"></div><svg class="b" style="left:811px;top:739px;" width="10" height="10" viewBox="0 0 10 10"><path d="M5 0.5 V9.5 M0.5 5 H9.5" stroke="#333" stroke-width="1"/></svg><div class="t" style="left:833.6px;top:739.3px;font-size:11px;color:#242424;font-weight:normal;font-family:'Liberation Sans', sans-serif;letter-spacing:-0.75px;">100%</div><div class="b" style="left:0px;top:754px;width:880px;height:2px;background:#2c3131;"></div><svg class="b" style="left:0;top:0" width="880" height="756"><rect x="473.5" y="279" width="334.5" height="422" fill="#fff"/><g stroke="#d9d9d9" stroke-width="1"><line x1="560.5" y1="338.2" x2="560.5" y2="625.0"/><line x1="560.5" y1="625.0" x2="532.7" y2="646.2"/><line x1="604.8" y1="338.2" x2="604.8" y2="625.0"/><line x1="604.8" y1="625.0" x2="577.0" y2="646.2"/><line x1="649.0" y1="338.2" x2="649.0" y2="625.0"/><line x1="649.0" y1="625.0" x2="621.2" y2="646.2"/><line x1="693.3" y1="338.2" x2="693.3" y2="625.0"/><line x1="693.3" y1="625.0" x2="665.5" y2="646.2"/><line x1="737.5" y1="338.2" x2="737.5" y2="625.0"/><line x1="737.5" y1="625.0" x2="709.7" y2="646.2"/><line x1="781.8" y1="338.2" x2="781.8" y2="625.0"/><line x1="781.8" y1="625.0" x2="754.0" y2="646.2"/><line x1="560.5" y1="338.2" x2="781.8" y2="338.2"/><line x1="560.5" y1="338.2" x2="532.7" y2="359.4"/><line x1="560.5" y1="386.0" x2="781.8" y2="386.0"/><line x1="560.5" y1="386.0" x2="532.7" y2="407.2"/><line x1="560.5" y1="433.8" x2="781.8" y2="433.8"/><line x1="560.5" y1="433.8" x2="532.7" y2="455.0"/><line x1="560.5" y1="481.6" x2="781.8" y2="481.6"/><line x1="560.5" y1="481.6" x2="532.7" y2="502.8"/><line x1="560.5" y1="529.4" x2="781.8" y2="529.4"/><line x1="560.5" y1="529.4" x2="532.7" y2="550.6"/><line x1="560.5" y1="577.2" x2="781.8" y2="577.2"/><line x1="560.5" y1="577.2" x2="532.7" y2="598.4"/><line x1="560.5" y1="625.0" x2="781.8" y2="625.0"/><line x1="560.5" y1="625.0" x2="532.7" y2="646.2"/></g><path d="M541.8 600.4 L552.7 592.7 L583.6 592.7 L572.7 600.4 Z" fill="#0f465f"/><path d="M572.7 600.4 L583.6 592.7 L614.5 592.7 L603.6 600.4 Z" fill="#b3582a"/><path d="M603.6 600.4 L614.5 592.7 L614.5 624.3 L603.6 632.0 Z" fill="#9c4a1f"/><rect x="541.8" y="600.4" width="30.9" height="31.6" fill="#156082"/><rect x="572.7" y="600.4" width="30.9" height="31.6" fill="#e97132"/><path d="M541.8 552.5 L552.7 544.8 L623.3 544.8 L612.4 552.5 Z" fill="#0f465f"/><path d="M612.4 552.5 L623.3 544.8 L707.2 544.8 L696.3 552.5 Z" fill="#b3582a"/><path d="M696.3 552.5 L707.2 544.8 L707.2 576.4 L696.3 584.1 Z" fill="#9c4a1f"/><rect x="541.8" y="552.5" width="70.6" height="31.6" fill="#156082"/><rect x="612.4" y="552.5" width="83.8" height="31.6" fill="#e97132"/><path d="M541.8 504.7 L552.7 497.0 L605.7 497.0 L594.8 504.7 Z" fill="#0f465f"/><path d="M594.8 504.7 L605.7 497.0 L689.5 497.0 L678.6 504.7 Z" fill="#b3582a"/><path d="M678.6 504.7 L689.5 497.0 L689.5 528.6 L678.6 536.3 Z" fill="#9c4a1f"/><rect x="541.8" y="504.7" width="53.0" height="31.6" fill="#156082"/><rect x="594.8" y="504.7" width="83.8" height="31.6" fill="#e97132"/><path d="M541.8 456.8 L552.7 449.1 L623.3 449.1 L612.4 456.8 Z" fill="#0f465f"/><path d="M612.4 456.8 L623.3 449.1 L698.3 449.1 L687.4 456.8 Z" fill="#b3582a"/><path d="M687.4 456.8 L698.3 449.1 L698.3 480.8 L687.4 488.4 Z" fill="#9c4a1f"/><rect x="541.8" y="456.8" width="70.6" height="31.6" fill="#156082"/><rect x="612.4" y="456.8" width="75.0" height="31.6" fill="#e97132"/><path d="M541.8 409.0 L552.7 401.3 L627.7 401.3 L616.8 409.0 Z" fill="#0f465f"/><path d="M616.8 409.0 L627.7 401.3 L720.4 401.3 L709.5 409.0 Z" fill="#b3582a"/><path d="M709.5 409.0 L720.4 401.3 L720.4 432.9 L709.5 440.6 Z" fill="#9c4a1f"/><rect x="541.8" y="409.0" width="75.0" height="31.6" fill="#156082"/><rect x="616.8" y="409.0" width="92.7" height="31.6" fill="#e97132"/><path d="M541.8 361.1 L552.7 353.4 L636.5 353.4 L625.6 361.1 Z" fill="#0f465f"/><path d="M625.6 361.1 L636.5 353.4 L742.5 353.4 L731.6 361.1 Z" fill="#b3582a"/><path d="M731.6 361.1 L742.5 353.4 L742.5 385.1 L731.6 392.8 Z" fill="#9c4a1f"/><rect x="541.8" y="361.1" width="83.8" height="31.6" fill="#156082"/><rect x="625.6" y="361.1" width="105.9" height="31.6" fill="#e97132"/></svg><div class="t" style="left:602.5px;top:292.7px;font-size:16.62px;color:#595959;font-weight:normal;font-family:'Liberation Sans', sans-serif;">Chart Title</div><div class="t" style="left:334.3px;width:400px;text-align:center;top:655.6px;font-size:9.5px;color:#595959;font-weight:normal;font-family:'Liberation Sans', sans-serif;">0</div><div class="t" style="left:378.3px;width:400px;text-align:center;top:655.6px;font-size:9.5px;color:#595959;font-weight:normal;font-family:'Liberation Sans', sans-serif;">0.1</div><div class="t" style="left:422.3px;width:400px;text-align:center;top:655.6px;font-size:9.5px;color:#595959;font-weight:normal;font-family:'Liberation Sans', sans-serif;">0.2</div><div class="t" style="left:466.3px;width:400px;text-align:center;top:655.6px;font-size:9.5px;color:#595959;font-weight:normal;font-family:'Liberation Sans', sans-serif;">0.3</div><div class="t" style="left:510.3px;width:400px;text-align:center;top:655.6px;font-size:9.5px;color:#595959;font-weight:normal;font-family:'Liberation Sans', sans-serif;">0.4</div><div class="t" style="left:554.3px;width:400px;text-align:center;top:655.6px;font-size:9.5px;color:#595959;font-weight:normal;font-family:'Liberation Sans', sans-serif;">0.5</div><div class="t" style="right:355.5px;top:618.4px;font-size:9.5px;color:#595959;font-weight:normal;font-family:'Liberation Sans', sans-serif;">B1</div><div class="t" style="right:355.5px;top:570.6px;font-size:9.5px;color:#595959;font-weight:normal;font-family:'Liberation Sans', sans-serif;">B2</div><div class="t" style="right:355.5px;top:522.7px;font-size:9.5px;color:#595959;font-weight:normal;font-family:'Liberation Sans', sans-serif;">B3</div><div class="t" style="right:355.5px;top:474.9px;font-size:9.5px;color:#595959;font-weight:normal;font-family:'Liberation Sans', sans-serif;">B4</div><div class="t" style="right:355.5px;top:427.0px;font-size:9.5px;color:#595959;font-weight:normal;font-family:'Liberation Sans', sans-serif;">B5</div><div class="t" style="right:355.5px;top:379.2px;font-size:9.5px;color:#595959;font-weight:normal;font-family:'Liberation Sans', sans-serif;">B6</div><div class="t" style="left:626.4px;top:675.3px;font-size:11.86px;color:#595959;font-weight:normal;font-family:'Liberation Sans', sans-serif;">Values</div><div class="t" style="left:441px;top:496.5px;width:120px;text-align:center;font-size:12px;line-height:12px;color:#595959;transform:rotate(-90deg);transform-origin:60px 6px;font-family:&quot;Liberation Sans&quot;,sans-serif;">Categories</div>
<div class="b" style="left:0;top:0;width:880px;height:756px;box-sizing:border-box;border-left:1px solid #1a7143;border-right:1px solid #1a7143;border-top:1px solid #1a7143;pointer-events:none;"></div>
</body></html>
